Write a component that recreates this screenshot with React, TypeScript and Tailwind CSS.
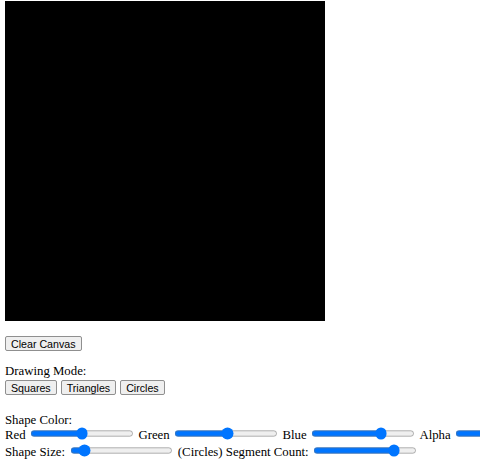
import React from "react";

function Btn({ children }: { children: React.ReactNode }) {
  return (
    <button className="flex h-[15px] items-center rounded-[2px] border border-[#8f8f8f] bg-[#efefef] px-[5px] font-['Liberation_Sans',Arial,sans-serif] text-[10.67px] leading-[12px] text-black">
      {children}
    </button>
  );
}

function Range({ value }: { value: number }) {
  return (
    <input
      type="range"
      min={0}
      max={100}
      defaultValue={value}
      className="m-0 h-[16px] w-[129px] shrink-0 [zoom:0.8]"
    />
  );
}

function Label({ children }: { children: React.ReactNode }) {
  return <span className="mt-[1px] shrink-0 leading-[15px]">{children}</span>;
}

export default function App() {
  return (
    <div className="w-[480px] overflow-hidden whitespace-nowrap bg-white pl-[5px] pt-[1px] font-['Liberation_Serif','Times_New_Roman',serif] text-[12.8px] text-black">
      <div className="h-[320px] w-[320px] bg-black" />
      <div className="mt-[15px] flex">
        <Btn>Clear Canvas</Btn>
      </div>
      <div className="mt-[13px] leading-[15px]">Drawing Mode:</div>
      <div className="mt-[1px] flex gap-x-[4px]">
        <Btn>Squares</Btn>
        <Btn>Triangles</Btn>
        <Btn>Circles</Btn>
      </div>
      <div className="mt-[18px] h-[14px] leading-[14px]">Shape Color:</div>
      <div className="flex h-[17px] items-start gap-x-[4.8px]">
        <Label>Red</Label>
        <Range value={50} />
        <Label>Green</Label>
        <Range value={52} />
        <Label>Blue</Label>
        <Range value={70} />
        <Label>Alpha</Label>
        <Range value={100} />
      </div>
      <div className="flex h-[17px] items-start gap-x-[4.8px]">
        <Label>Shape Size:</Label>
        <Range value={9} />
        <Label>(Circles) Segment Count:</Label>
        <Range value={82} />
      </div>
    </div>
  );
}
